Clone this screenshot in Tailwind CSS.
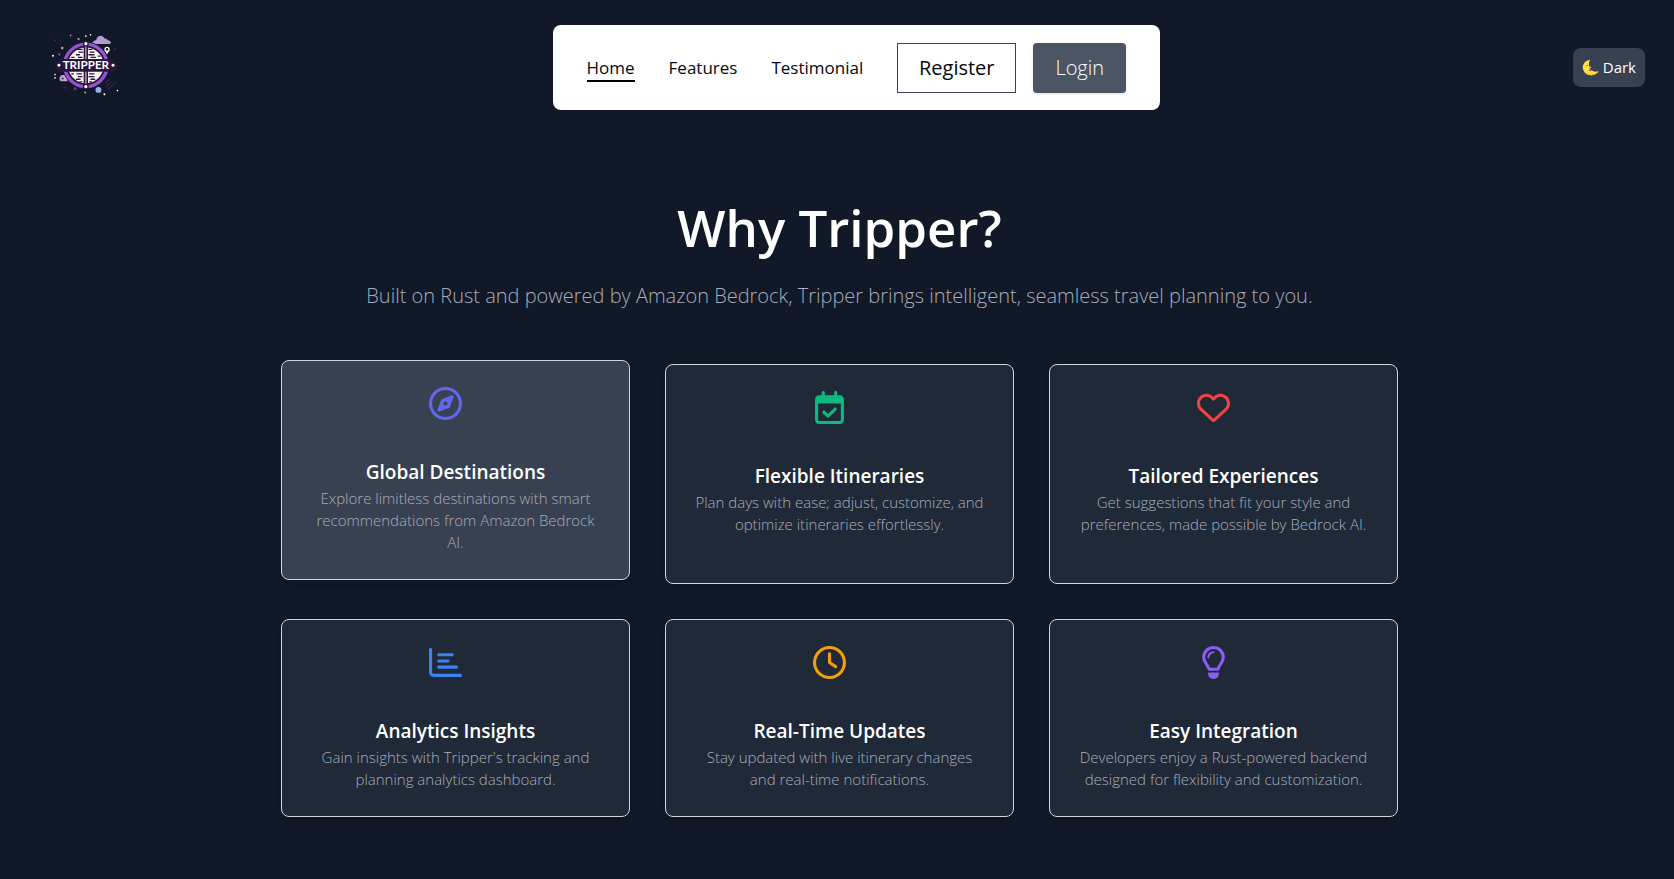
<!DOCTYPE html>
<html lang="en">

<head>
	<meta charset="UTF-8">
	<meta name="viewport" content="width=device-width, initial-scale=1.0">
	<title>Tripper</title>
	<script src="https://cdn.jsdelivr.net/npm/@tailwindcss/browser@4"></script>
</head>

<body class="bg-[#111827] min-h-screen font-['Open_Sans','Noto_Sans',sans-serif]">
	<header class="flex items-center justify-between pt-[25px] pl-[33px] pr-[29px]">
		<a href="#" aria-label="Tripper" class="px-[17px] pb-[5px]">
			<svg class="w-[73px] h-[70px]" viewBox="60 30 220 210">
				<!-- cloud and scattered dots -->
				<path d="M187 68c4-7 10-6 13-10 3-14 20-14 24-3 9 0 9 6 17 8 4 3 2 10-3 9l-38 0c-6 0-8-5-13-4z" fill="#b79ad6" />
				<path d="M92 184c-6-6-3-18 6-19 8-1 14 6 15 19z" fill="#c9a2dc" />
				<circle cx="98" cy="176" r="3" fill="#3b1f55" />
				<g stroke="#4b2c68" stroke-width="3">
					<path d="M72 62l8-4M88 66l6-6M120 42l8 6M228 200l18-14M234 208l24-20M226 190l14-12M84 150h8M100 200l10 6M130 212l12-4M252 90l8-4" />
				</g>
				<g fill="#fff">
					<circle cx="168" cy="48" r="2.5" />
					<circle cx="182" cy="44" r="2.5" />
					<circle cx="69" cy="107" r="3" />
					<circle cx="75" cy="164" r="2.5" />
					<circle cx="75" cy="174" r="2.5" />
					<circle cx="224" cy="223" r="3" />
					<circle cx="263" cy="212" r="2.5" />
				</g>
				<g fill="#d98bb8">
					<circle cx="97" cy="84" r="4" />
					<circle cx="146" cy="57" r="3.5" />
					<circle cx="122" cy="46" r="2.5" />
					<circle cx="135" cy="205" r="2.5" />
					<circle cx="166" cy="218" r="3" />
				</g>
				<circle cx="88" cy="103" r="3" fill="#9a5fd0" />
				<circle cx="206" cy="210" r="9" fill="#8fb4f0" />
				<!-- globe -->
				<circle cx="168" cy="136" r="63" fill="#faf5ee" stroke="#2a1540" stroke-width="16" />
				<circle cx="168" cy="136" r="64" fill="none" stroke="#9257cf" stroke-width="10" />
				<circle cx="168" cy="136" r="56" fill="none" stroke="#2a1540" stroke-width="4" />
				<g fill="none" stroke="#2a1540" stroke-width="4">
					<path d="M142 88h16M146 96h14M138 104h12M144 112h14M176 88h12M180 96h14M176 104h18M182 112h16M124 112h10M204 108h8M140 162h16M144 170h14M138 178h14M148 186h10M178 162h16M176 170h18M182 178h14M178 186h8M124 162h8" />
				</g>
				<path d="M168 74v126" stroke="#2a1540" stroke-width="13" />
				<path d="M168 76v122" stroke="#b07ab5" stroke-width="5" />
				<circle cx="168" cy="71" r="7" fill="#fff" stroke="#2a1540" stroke-width="4" />
				<circle cx="168" cy="200" r="7" fill="#fff" stroke="#2a1540" stroke-width="4" />
				<circle cx="232" cy="88" r="6" fill="#2a1540" stroke="#fff" stroke-width="4" />
				<path d="M228 95l4 8 4-8z" fill="#fff" />
				<rect x="76" y="117" width="186" height="38" rx="18" fill="#271640" />
				<circle cx="87" cy="136" r="4.5" fill="#fff" />
				<circle cx="250" cy="136" r="4.5" fill="#fff" />
				<text x="168" y="148" text-anchor="middle" class="font-['Lato'] font-bold text-[35px]" fill="#fff">TRIPPER</text>
			</svg>
		</a>

		<nav class="flex items-center gap-[34px] bg-white rounded-lg px-[34px] h-[85px] text-[17px] text-gray-950">
			<a href="#" class="border-b-2 border-black leading-6 pt-0.5">Home</a>
			<a href="#features" class="leading-6">Features</a>
			<a href="#testimonial" class="leading-6">Testimonial</a>
			<div class="flex gap-[17px]">
				<button class="h-[50px] w-[119px] border border-[#374151] text-[20px]">Register</button>
				<button class="h-[50px] w-[93px] rounded bg-[#4b5563] text-[20px] font-light text-white shadow">Login</button>
			</div>
		</nav>

		<button class="flex items-center gap-1 h-[39px] px-[9px] rounded-lg bg-[#374151] text-[15px] text-white">
			<svg class="size-[17px]" viewBox="0 0 34 34">
				<path d="M16 1C5 4 0 12 2 20c2 9 11 14 20 12 5-1 9-4 11-8-4 2-8 2-11 0-6-2-8-5-8-10 0-6 0-8 2-13z" fill="#ffe04a" />
				<path d="M2 18c1 9 9 16 19 14 6-1 10-4 12-8-7 6-14 6-20 4S3 23 2 18z" fill="#fbcb3a" />
				<path d="M14 14l5 3-4 2" fill="#ffe04a" />
				<path d="M9 14q2-2 3 0M14 22q2 2 4 1" fill="none" stroke="#7a5200" stroke-width="2" />
			</svg>
			Dark
		</button>
	</header>

	<main class="pl-[5px]">
		<section id="features" class="max-w-[1117px] mx-auto pt-[85px] pb-[62px] text-center">
			<h2 class="text-[51px] leading-[64px] font-semibold text-white">Why Tripper?</h2>
			<p class="mt-[21px] text-[20px] leading-8 font-light text-[#a7aeb9]">Built on Rust and powered by Amazon Bedrock, Tripper brings intelligent, seamless travel planning to you.</p>

			<div class="grid grid-cols-3 gap-[35px] mt-[52px]">
				<article class="-translate-y-1 rounded-lg border border-[#d1d5db] bg-[#374151] px-[27px] py-[26px] shadow-lg">
					<svg class="size-[33px] ml-[calc(50%-27px)] mb-[39px] text-[#6366f1]" fill="currentColor" viewBox="0 0 512 512">
						<path d="M464 256A208 208 0 1 0 48 256a208 208 0 1 0 416 0zM0 256a256 256 0 1 1 512 0A256 256 0 1 1 0 256zm306.7 69.1L162.4 380.6c-19.4 7.5-38.5-11.6-31-31l55.5-144.3c3.3-8.5 9.9-15.1 18.4-18.4l144.3-55.5c19.4-7.5 38.5 11.6 31 31L325.1 306.7c-3.2 8.5-9.9 15.1-18.4 18.4zM288 256a32 32 0 1 0 -64 0 32 32 0 1 0 64 0z" />
					</svg>
					<h3 class="mb-0.5 text-[19px] leading-[26px] font-semibold text-white">Global Destinations</h3>
					<p class="text-[15px] leading-[22px] font-light text-[#a7aeb9]">Explore limitless destinations with smart recommendations from Amazon Bedrock AI.</p>
				</article>

				<article class="rounded-lg border border-[#d1d5db] bg-[#1f2937] px-[27px] py-[26px] shadow-md">
					<svg class="size-[33px] ml-[calc(50%-27px)] mb-[39px] text-[#10b981]" fill="currentColor" viewBox="-32 0 512 512">
						<path d="M128 0c13.3 0 24 10.7 24 24V64H296V24c0-13.3 10.7-24 24-24s24 10.7 24 24V64h40c35.3 0 64 28.7 64 64v16 48V448c0 35.3-28.7 64-64 64H64c-35.3 0-64-28.7-64-64V192 144 128C0 92.7 28.7 64 64 64h40V24c0-13.3 10.7-24 24-24zM400 192H48V448c0 8.8 7.2 16 16 16H384c8.8 0 16-7.2 16-16V192zM329 297L217 409c-9.4 9.4-24.6 9.4-33.9 0l-64-64c-9.4-9.4-9.4-24.6 0-33.9s24.6-9.4 33.9 0l47 47 95-95c9.4-9.4 24.6-9.4 33.9 0s9.4 24.6 0 33.9z" />
					</svg>
					<h3 class="mb-0.5 text-[19px] leading-[26px] font-semibold text-white">Flexible Itineraries</h3>
					<p class="text-[15px] leading-[22px] font-light text-[#a7aeb9]">Plan days with ease; adjust, customize, and optimize itineraries effortlessly.</p>
				</article>

				<article class="rounded-lg border border-[#d1d5db] bg-[#1f2937] px-[27px] py-[26px] shadow-md">
					<svg class="size-[33px] ml-[calc(50%-27px)] mb-[39px] text-[#ef4444]" fill="currentColor" viewBox="0 0 512 512">
						<path d="M225.8 468.2l-2.5-2.3L48.1 303.2C17.4 274.7 0 234.7 0 192.8v-3.3c0-70.4 50-130.8 119.2-144C158.6 37.9 198.9 47 231 69.6c9 6.4 17.4 13.8 25 22.3c4.2-4.8 8.7-9.2 13.5-13.3c3.7-3.2 7.5-6.2 11.5-9c0 0 0 0 0 0C313.1 47 353.4 37.9 392.8 45.4C462 58.6 512 119.1 512 189.5v3.3c0 41.9-17.4 81.9-48.1 110.4L288.7 465.9l-2.5 2.3c-8.2 7.6-19 11.9-30.2 11.9s-22-4.2-30.2-11.9zM239.1 145c-.4-.3-.7-.7-1-1.1l-17.8-20c0 0-.1-.1-.1-.1c0 0 0 0 0 0c-23.1-25.9-58-37.7-92-31.2C81.6 101.5 48 142.1 48 189.5v3.3c0 28.5 11.9 55.8 32.8 75.2L256 430.7 431.2 268c20.9-19.4 32.8-46.7 32.8-75.2v-3.3c0-47.3-33.6-88-80.1-96.9c-34-6.5-69 5.4-92 31.2c0 0 0 0-.1 .1s0 0-.1 .1l-17.8 20c-.3 .4-.7 .7-1 1.1c-4.5 4.5-10.6 7-16.9 7s-12.4-2.5-16.9-7z" />
					</svg>
					<h3 class="mb-0.5 text-[19px] leading-[26px] font-semibold text-white">Tailored Experiences</h3>
					<p class="text-[15px] leading-[22px] font-light text-[#a7aeb9]">Get suggestions that fit your style and preferences, made possible by Bedrock AI.</p>
				</article>

				<article class="rounded-lg border border-[#d1d5db] bg-[#1f2937] px-[27px] py-[26px] shadow-md">
					<svg class="size-[33px] ml-[calc(50%-27px)] mb-[39px] text-[#3b82f6]" fill="currentColor" viewBox="0 0 512 512">
						<path d="M24 32c13.3 0 24 10.7 24 24V408c0 13.3 10.7 24 24 24H488c13.3 0 24 10.7 24 24s-10.7 24-24 24H72c-39.8 0-72-32.2-72-72V56C0 42.7 10.7 32 24 32zM128 136c0-13.3 10.7-24 24-24l208 0c13.3 0 24 10.7 24 24s-10.7 24-24 24l-208 0c-13.3 0-24-10.7-24-24zm24 72H296c13.3 0 24 10.7 24 24s-10.7 24-24 24H152c-13.3 0-24-10.7-24-24s10.7-24 24-24zm0 96H424c13.3 0 24 10.7 24 24s-10.7 24-24 24H152c-13.3 0-24-10.7-24-24s10.7-24 24-24z" />
					</svg>
					<h3 class="mb-0.5 text-[19px] leading-[26px] font-semibold text-white">Analytics Insights</h3>
					<p class="text-[15px] leading-[22px] font-light text-[#a7aeb9]">Gain insights with Tripper's tracking and planning analytics dashboard.</p>
				</article>

				<article class="rounded-lg border border-[#d1d5db] bg-[#1f2937] px-[27px] py-[26px] shadow-md">
					<svg class="size-[33px] ml-[calc(50%-27px)] mb-[39px] text-[#f59e0b]" fill="currentColor" viewBox="0 0 512 512">
						<path d="M464 256A208 208 0 1 1 48 256a208 208 0 1 1 416 0zM0 256a256 256 0 1 0 512 0A256 256 0 1 0 0 256zM232 120V256c0 8 4 15.5 10.7 20l96 64c11 7.4 25.9 4.4 33.3-6.7s4.4-25.9-6.7-33.3L280 243.2V120c0-13.3-10.7-24-24-24s-24 10.7-24 24z" />
					</svg>
					<h3 class="mb-0.5 text-[19px] leading-[26px] font-semibold text-white">Real-Time Updates</h3>
					<p class="text-[15px] leading-[22px] font-light text-[#a7aeb9]">Stay updated with live itinerary changes and real-time notifications.</p>
				</article>

				<article class="rounded-lg border border-[#d1d5db] bg-[#1f2937] px-[27px] py-[26px] shadow-md">
					<svg class="size-[33px] ml-[calc(50%-27px)] mb-[39px] text-[#8b5cf6]" fill="none" stroke="currentColor" viewBox="-64 0 512 512">
						<path d="M192 24A152 152 0 0 0 40 176c0 78 60 106 84 184h136c24-78 84-106 84-184A152 152 0 0 0 192 24z" stroke-width="48" stroke-linejoin="round" />
						<path d="M112 176a80 80 0 0 1 80-80" stroke-width="32" stroke-linecap="round" />
						<path d="M108 412h168v20c0 44-36 80-84 80s-84-36-84-80z" fill="currentColor" stroke="none" />
					</svg>
					<h3 class="mb-0.5 text-[19px] leading-[26px] font-semibold text-white">Easy Integration</h3>
					<p class="text-[15px] leading-[22px] font-light text-[#a7aeb9]">Developers enjoy a Rust-powered backend designed for flexibility and customization.</p>
				</article>
			</div>
		</section>
	</main>
</body>

</html>
